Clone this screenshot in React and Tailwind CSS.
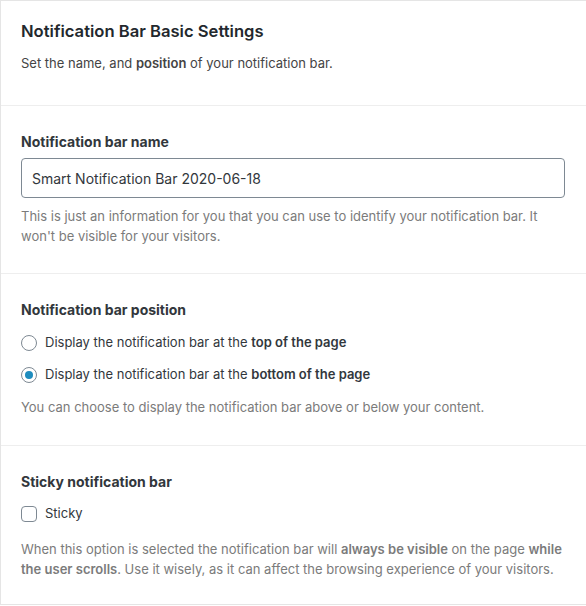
export default function App() {
  const font = { fontFamily: 'Inter, "Noto Sans", sans-serif' };
  return (
    <div className="w-[586px] h-[606px] overflow-hidden bg-white" style={font}>
      <div className="w-[640px] border-t border-l border-b border-[#e5e5e5] bg-white">
        <div className="pl-[20px] pt-[18px] pb-[32px]">
          <h2 className="text-[16.6px] leading-[24px] font-semibold text-[#23282d]">Notification Bar Basic Settings</h2>
          <p className="mt-[10px] text-[13px] leading-[20px] text-[#444]">
            Set the name, and <b className="font-semibold">position</b> of your notification bar.
          </p>
        </div>
        <div className="border-t border-[#eeeeee] pl-[20px] pt-[26px] pb-[27px]">
          <div className="text-[14px] leading-[20px] font-bold text-[#32373c]">Notification bar name</div>
          <div className="mt-[6px] w-[544px] h-[40px] border border-[#7e8993] rounded-[4px] flex items-center px-[10px] text-[14px] text-[#32373c]">
            Smart Notification Bar 2020-06-18
          </div>
          <p className="mt-[8px] w-[540px] text-[13px] leading-[20px] text-[#7b7b7b]">
            This is just an information for you that you can use to identify your notification bar. It won't be visible for your visitors.
          </p>
        </div>
        <div className="border-t border-[#eeeeee] pl-[20px] pt-[26px] pb-[28px]">
          <div className="text-[14px] leading-[20px] font-bold text-[#32373c]">Notification bar position</div>
          <div className="mt-[13px] flex items-center h-[20px] text-[13px] text-[#32373c]">
            <span className="w-[16px] h-[16px] rounded-full border border-[#7e8993] bg-white mr-[8px]" />
            <span>Display the notification bar at the <b className="font-semibold">top of the page</b></span>
          </div>
          <div className="mt-[12px] flex items-center h-[20px] text-[13px] text-[#32373c]">
            <span className="w-[16px] h-[16px] rounded-full border border-[#7e8993] bg-white mr-[8px] flex items-center justify-center">
              <span className="w-[8px] h-[8px] rounded-full bg-[#1e8cbe]" />
            </span>
            <span>Display the notification bar at the <b className="font-semibold">bottom of the page</b></span>
          </div>
          <p className="mt-[12px] text-[13px] leading-[20px] text-[#7b7b7b]">
            You can choose to display the notification bar above or below your content.
          </p>
        </div>
        <div className="border-t border-[#eeeeee] pl-[20px] pt-[26px] pb-[25px]">
          <div className="text-[14px] leading-[20px] font-bold text-[#32373c]">Sticky notification bar</div>
          <div className="mt-[12px] flex items-center h-[20px] text-[13px] text-[#32373c]">
            <span className="w-[16px] h-[16px] rounded-[4px] border border-[#7e8993] bg-white mr-[8px]" />
            <span>Sticky</span>
          </div>
          <p className="mt-[15px] w-[545px] text-[13px] leading-[20px] text-[#7b7b7b]">
            When this option is selected the notification bar will <b className="font-semibold">always be visible</b> on the page <b className="font-semibold">while the user scrolls</b>. Use it wisely, as it can affect the browsing experience of your visitors.
          </p>
        </div>
      </div>
    </div>
  );
}
